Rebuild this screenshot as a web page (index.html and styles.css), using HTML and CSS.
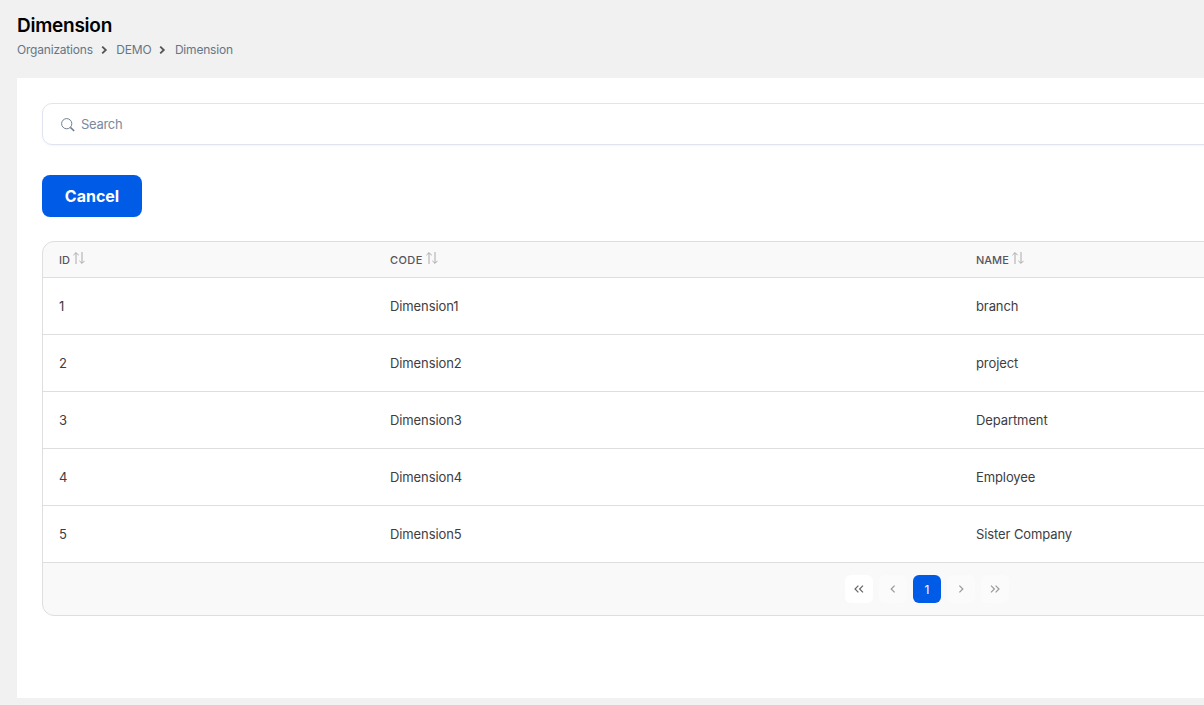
FILE: index.html
```html
<!DOCTYPE html>
<html lang="en">
<head>
    <meta charset="UTF-8">
    <meta name="viewport" content="width=device-width, initial-scale=1.0">
    <title>Dimension</title>
    <link rel="stylesheet" href="styles.css">
</head>
<body>
    <svg class="sprite">
        <symbol id="sort" viewBox="0 0 12 12">
            <path d="M3 12V.8M.4 3.2 3 .6l2.6 2.6M9 0v11.2M6.4 8.8 9 11.4l2.6-2.6"/>
        </symbol>
        <symbol id="crumb" viewBox="0 0 8 8">
            <path d="M2.2 .6 5.8 4 2.2 7.4"/>
        </symbol>
    </svg>
    <header class="page-header">
        <h1>Dimension</h1>
        <nav class="breadcrumb">
            <a class="crumb-org">Organizations</a>
            <svg class="crumb-icon"><use href="#crumb"/></svg>
            <a class="crumb-demo">DEMO</a>
            <svg class="crumb-icon"><use href="#crumb"/></svg>
            <span class="crumb-page">Dimension</span>
        </nav>
    </header>
    <main class="card">
        <div class="search">
            <svg class="search-icon" viewBox="0 0 14 14"><circle cx="5.7" cy="5.7" r="5.1"/><path d="m9.4 9.4 3.8 3.6" stroke-width="1.6"/></svg>
            <input type="text" placeholder="Search">
        </div>
        <button class="btn-cancel">Cancel</button>
        <div class="table-box">
            <table>
                <thead>
                    <tr>
                        <th class="col-id"><span>ID</span><svg class="sort-icon"><use href="#sort"/></svg></th>
                        <th class="col-code"><span>CODE</span><svg class="sort-icon"><use href="#sort"/></svg></th>
                        <th><span>NAME</span><svg class="sort-icon"><use href="#sort"/></svg></th>
                    </tr>
                </thead>
                <tbody>
                    <tr><td>1</td><td>Dimension1</td><td>branch</td></tr>
                    <tr><td>2</td><td>Dimension2</td><td>project</td></tr>
                    <tr><td>3</td><td>Dimension3</td><td>Department</td></tr>
                    <tr><td>4</td><td>Dimension4</td><td>Employee</td></tr>
                    <tr><td>5</td><td>Dimension5</td><td>Sister Company</td></tr>
                </tbody>
            </table>
            <div class="pagination">
                <button class="page-btn first"><svg viewBox="0 0 10 8"><path d="M4.4 .6 1 4l3.4 3.4M9 .6 5.6 4 9 7.4"/></svg></button>
                <button class="page-btn disabled"><svg viewBox="0 0 10 8"><path d="M6.6 .6 3.2 4l3.4 3.4"/></svg></button>
                <button class="page-btn active">1</button>
                <button class="page-btn disabled"><svg viewBox="0 0 10 8"><path d="M3.4 .6 6.8 4 3.4 7.4"/></svg></button>
                <button class="page-btn disabled"><svg viewBox="0 0 10 8"><path d="M1 .6 4.4 4 1 7.4M5.6 .6 9 4 5.6 7.4"/></svg></button>
            </div>
        </div>
    </main>
</body>
</html>
```
FILE: styles.css
```css
* {
    box-sizing: border-box;
}
html {
    overflow: hidden;
}
body {
    margin: 0;
    height: 100vh;
    padding: 14px 0 0 17px;
    overflow: hidden;
    background: #f1f1f1;
    color: #3d3d42;
    font-family: Inter, "Open Sans", sans-serif;
    font-size: 13px;
}
svg {
    fill: none;
    stroke: currentColor;
}
.sprite {
    display: none;
}
button {
    border: none;
    font-family: inherit;
    cursor: pointer;
}

/* Title and breadcrumb */
.page-header {
    height: 64px;
}
h1 {
    margin: 0;
    font-size: 19px;
    line-height: 24px;
    font-weight: 600;
    letter-spacing: -0.25px;
    color: #000;
}
.breadcrumb {
    display: flex;
    align-items: center;
    margin-top: 3px;
    height: 16px;
    font-size: 12px;
    letter-spacing: -0.2px;
    color: #667684;
}
.crumb-icon {
    width: 8px;
    height: 8px;
    margin: 1px 8.5px 0 7px;
    color: #555;
    stroke-width: 1.8;
}

.card {
    width: 1820px;
    height: 620px;
    padding: 25px;
    background: #fff;
}
.search {
    display: flex;
    align-items: center;
    gap: 6px;
    height: 42px;
    padding-left: 18px;
    border: 1px solid #e1e4f0;
    border-radius: 10px;
    box-shadow: 0 1px 2px rgba(80, 90, 160, 0.06);
}
.search-icon {
    width: 14px;
    height: 14px;
    margin-top: 1px;
    color: #71808f;
}
.search input {
    flex: 1;
    padding: 0;
    border: none;
    outline: none;
    font: inherit;
    letter-spacing: -0.3px;
}
.search input::placeholder {
    color: #7a899c;
}
.btn-cancel {
    display: block;
    width: 100px;
    height: 42px;
    margin: 30px 0 24px;
    border-radius: 8px;
    background: #005ce6;
    color: #fff;
    font-size: 16px;
    font-weight: 700;
}

/* Table */
.table-box {
    height: 375px;
    overflow: hidden;
    border: 1px solid #dedede;
    border-radius: 12px;
    background: #f9f9f9;
}
table {
    width: 100%;
    table-layout: fixed;
    border-collapse: separate;
    border-spacing: 0;
}
th,
td {
    padding: 0 16px;
    border-bottom: 1px solid #dedede;
    text-align: left;
}
th {
    height: 36px;
    font-size: 11px;
    font-weight: 500;
    line-height: 14px;
    color: #55555d;
}
th span {
    display: inline-block;
    vertical-align: middle;
}
td {
    height: 57px;
    background: #fff;
    letter-spacing: -0.1px;
}
.col-id {
    width: 331px;
}
.col-code {
    width: 586px;
}
.col-code span {
    letter-spacing: 0.4px;
}
.sort-icon {
    width: 12px;
    height: 12px;
    margin: 0 0 4px 3px;
    vertical-align: middle;
    color: #aaa;
}

.pagination {
    display: flex;
    justify-content: center;
    gap: 6px;
    padding-top: 12px;
}
.page-btn {
    display: flex;
    align-items: center;
    justify-content: center;
    width: 28px;
    height: 28px;
    padding: 0;
    border-radius: 6px;
    background: #fff;
    color: #666;
    font-size: 12px;
}
.page-btn svg {
    width: 10px;
    height: 8px;
    stroke-width: 1.2;
}
.page-btn.disabled {
    background: #fbfbfb;
    color: #999;
}
.page-btn.active {
    background: #005ce6;
    color: #fff;
}
```
